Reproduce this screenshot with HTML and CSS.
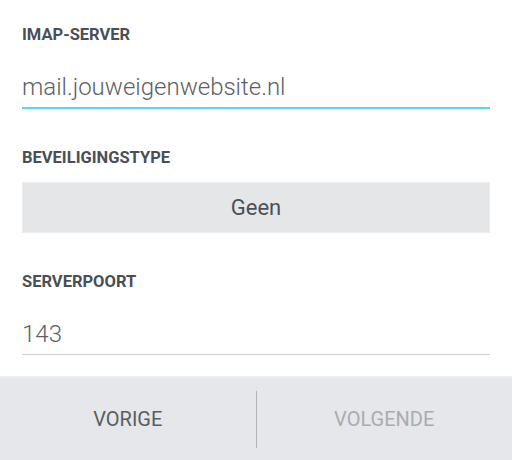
FILE: index.html
```html
<!DOCTYPE html>
<html lang="nl">
<head>
  <meta charset="UTF-8">
  <title>Inkomende server</title>
  <link rel="stylesheet" href="styles.css">
</head>
<body>
  <div class="form">
    <label class="field-label" for="imap">IMAP-SERVER</label>
    <input class="field-input active" id="imap" type="text" value="mail.jouweigenwebsite.nl">

    <div class="field-label">BEVEILIGINGSTYPE</div>
    <button class="select">Geen</button>

    <label class="field-label" for="poort">SERVERPOORT</label>
    <input class="field-input" id="poort" type="text" value="143">
  </div>

  <div class="footer">
    <button class="nav-btn">VORIGE</button>
    <div class="divider"></div>
    <button class="nav-btn disabled">VOLGENDE</button>
  </div>
</body>
</html>
```

FILE: styles.css
```css
html, body {
  height: 100%;
}

body {
  margin: 0;
  padding: 0;
  font-family: Roboto, "Noto Sans", sans-serif;
  background-color: #ffffff;
  display: flex;
  flex-direction: column;
}

.form {
  flex: 1;
  display: flex;
  flex-direction: column;
  padding: 25px 22px 0;
}

.field-label {
  display: block;
  font-size: 16.5px;
  line-height: 20px;
  font-weight: 700;
  color: #4a4f57;
}

.field-input {
  display: block;
  width: 100%;
  box-sizing: border-box;
  margin: 27px 0 39px;
  padding: 0 0 5px;
  height: 36px;
  border: none;
  border-bottom: 1px solid #d0d1d3;
  font-family: Roboto, sans-serif;
  font-size: 24px;
  font-weight: 300;
  line-height: 30px;
  color: #5c6065;
  background: transparent;
  outline: none;
}

.field-input:last-child {
  margin-bottom: 0;
}

.field-input.active {
  height: 37px;
  border-bottom: 2px solid #62d2f2;
}

.select {
  display: block;
  width: 100%;
  height: 51px;
  margin: 14px 0 39px;
  border: 1px solid #ececed;
  background-color: #e5e6e8;
  font-family: Roboto, sans-serif;
  font-size: 22px;
  color: #4b5058;
  cursor: pointer;
}

.footer {
  height: 82px;
  flex-shrink: 0;
  display: flex;
  align-items: center;
  background-color: #e5e7ea;
  border-top: 2px solid #eeeff1;
}

.nav-btn {
  flex: 1;
  height: 100%;
  border: none;
  background: transparent;
  font-family: Roboto, sans-serif;
  font-size: 20px;
  color: #5a5d62;
  cursor: pointer;
}

.nav-btn.disabled {
  color: #a9acb0;
  cursor: default;
}

.divider {
  width: 1px;
  height: 57px;
  background-color: #b2b5b8;
}
```
